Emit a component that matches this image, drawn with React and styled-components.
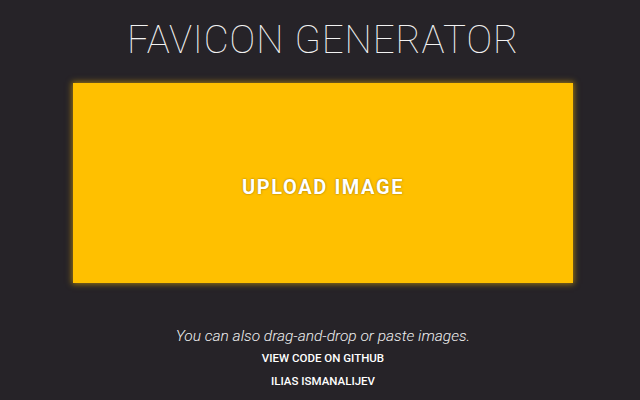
import React from 'react';
import styled, { createGlobalStyle } from 'styled-components';

const GlobalStyle = createGlobalStyle`
	html, body {
		margin: 0;
		padding: 0;
		background: #262328;
	}
	body {
		font-family: Roboto, "Liberation Sans", sans-serif;
		color: #fff;
	}
`;

const Page = styled.div`
	width: 640px;
	height: 400px;
	display: flex;
	flex-direction: column;
	align-items: center;
	box-sizing: border-box;
	padding: 19px 0 0 6px;
`;

const Title = styled.h1`
	margin: 0;
	font-size: 38.5px;
	font-weight: 100;
	line-height: 42px;
	letter-spacing: 0.9px;
	color: #f2f2f2;
`;

const Dropzone = styled.div`
	margin-top: 22px;
	width: 500px;
	height: 200px;
	box-sizing: border-box;
	padding-top: 8px;
	background: #ffc000;
	box-shadow: 0 0 6px 1px rgba(255, 192, 0, 0.55);
	display: flex;
	align-items: center;
	justify-content: center;
	cursor: pointer;
`;

const UploadLabel = styled.span`
	font-size: 20px;
	font-weight: 700;
	letter-spacing: 1.6px;
	color: #fff;
	text-shadow: 0 0 2px rgba(90, 60, 0, 0.7);
`;

const Hint = styled.p`
	margin: 43px 0 0;
	font-size: 15.5px;
	font-weight: 300;
	font-style: italic;
	color: #f0f0f0;
	line-height: 20px;
`;

const FooterLink = styled.a`
	display: block;
	margin-top: ${({ gap }) => gap}px;
	font-size: 11.5px;
	font-weight: 500;
	color: #fff;
	text-decoration: none;
	line-height: 14px;
`;

const App = () => (
	<>
		<GlobalStyle />
		<Page>
			<Title>FAVICON GENERATOR</Title>
			<Dropzone>
				<UploadLabel>UPLOAD IMAGE</UploadLabel>
			</Dropzone>
			<Hint>You can also drag-and-drop or paste images.</Hint>
			<FooterLink href="#" gap={5}>VIEW CODE ON GITHUB</FooterLink>
			<FooterLink href="#" gap={9}>ILIAS ISMANALIJEV</FooterLink>
		</Page>
	</>
);

export default App;
